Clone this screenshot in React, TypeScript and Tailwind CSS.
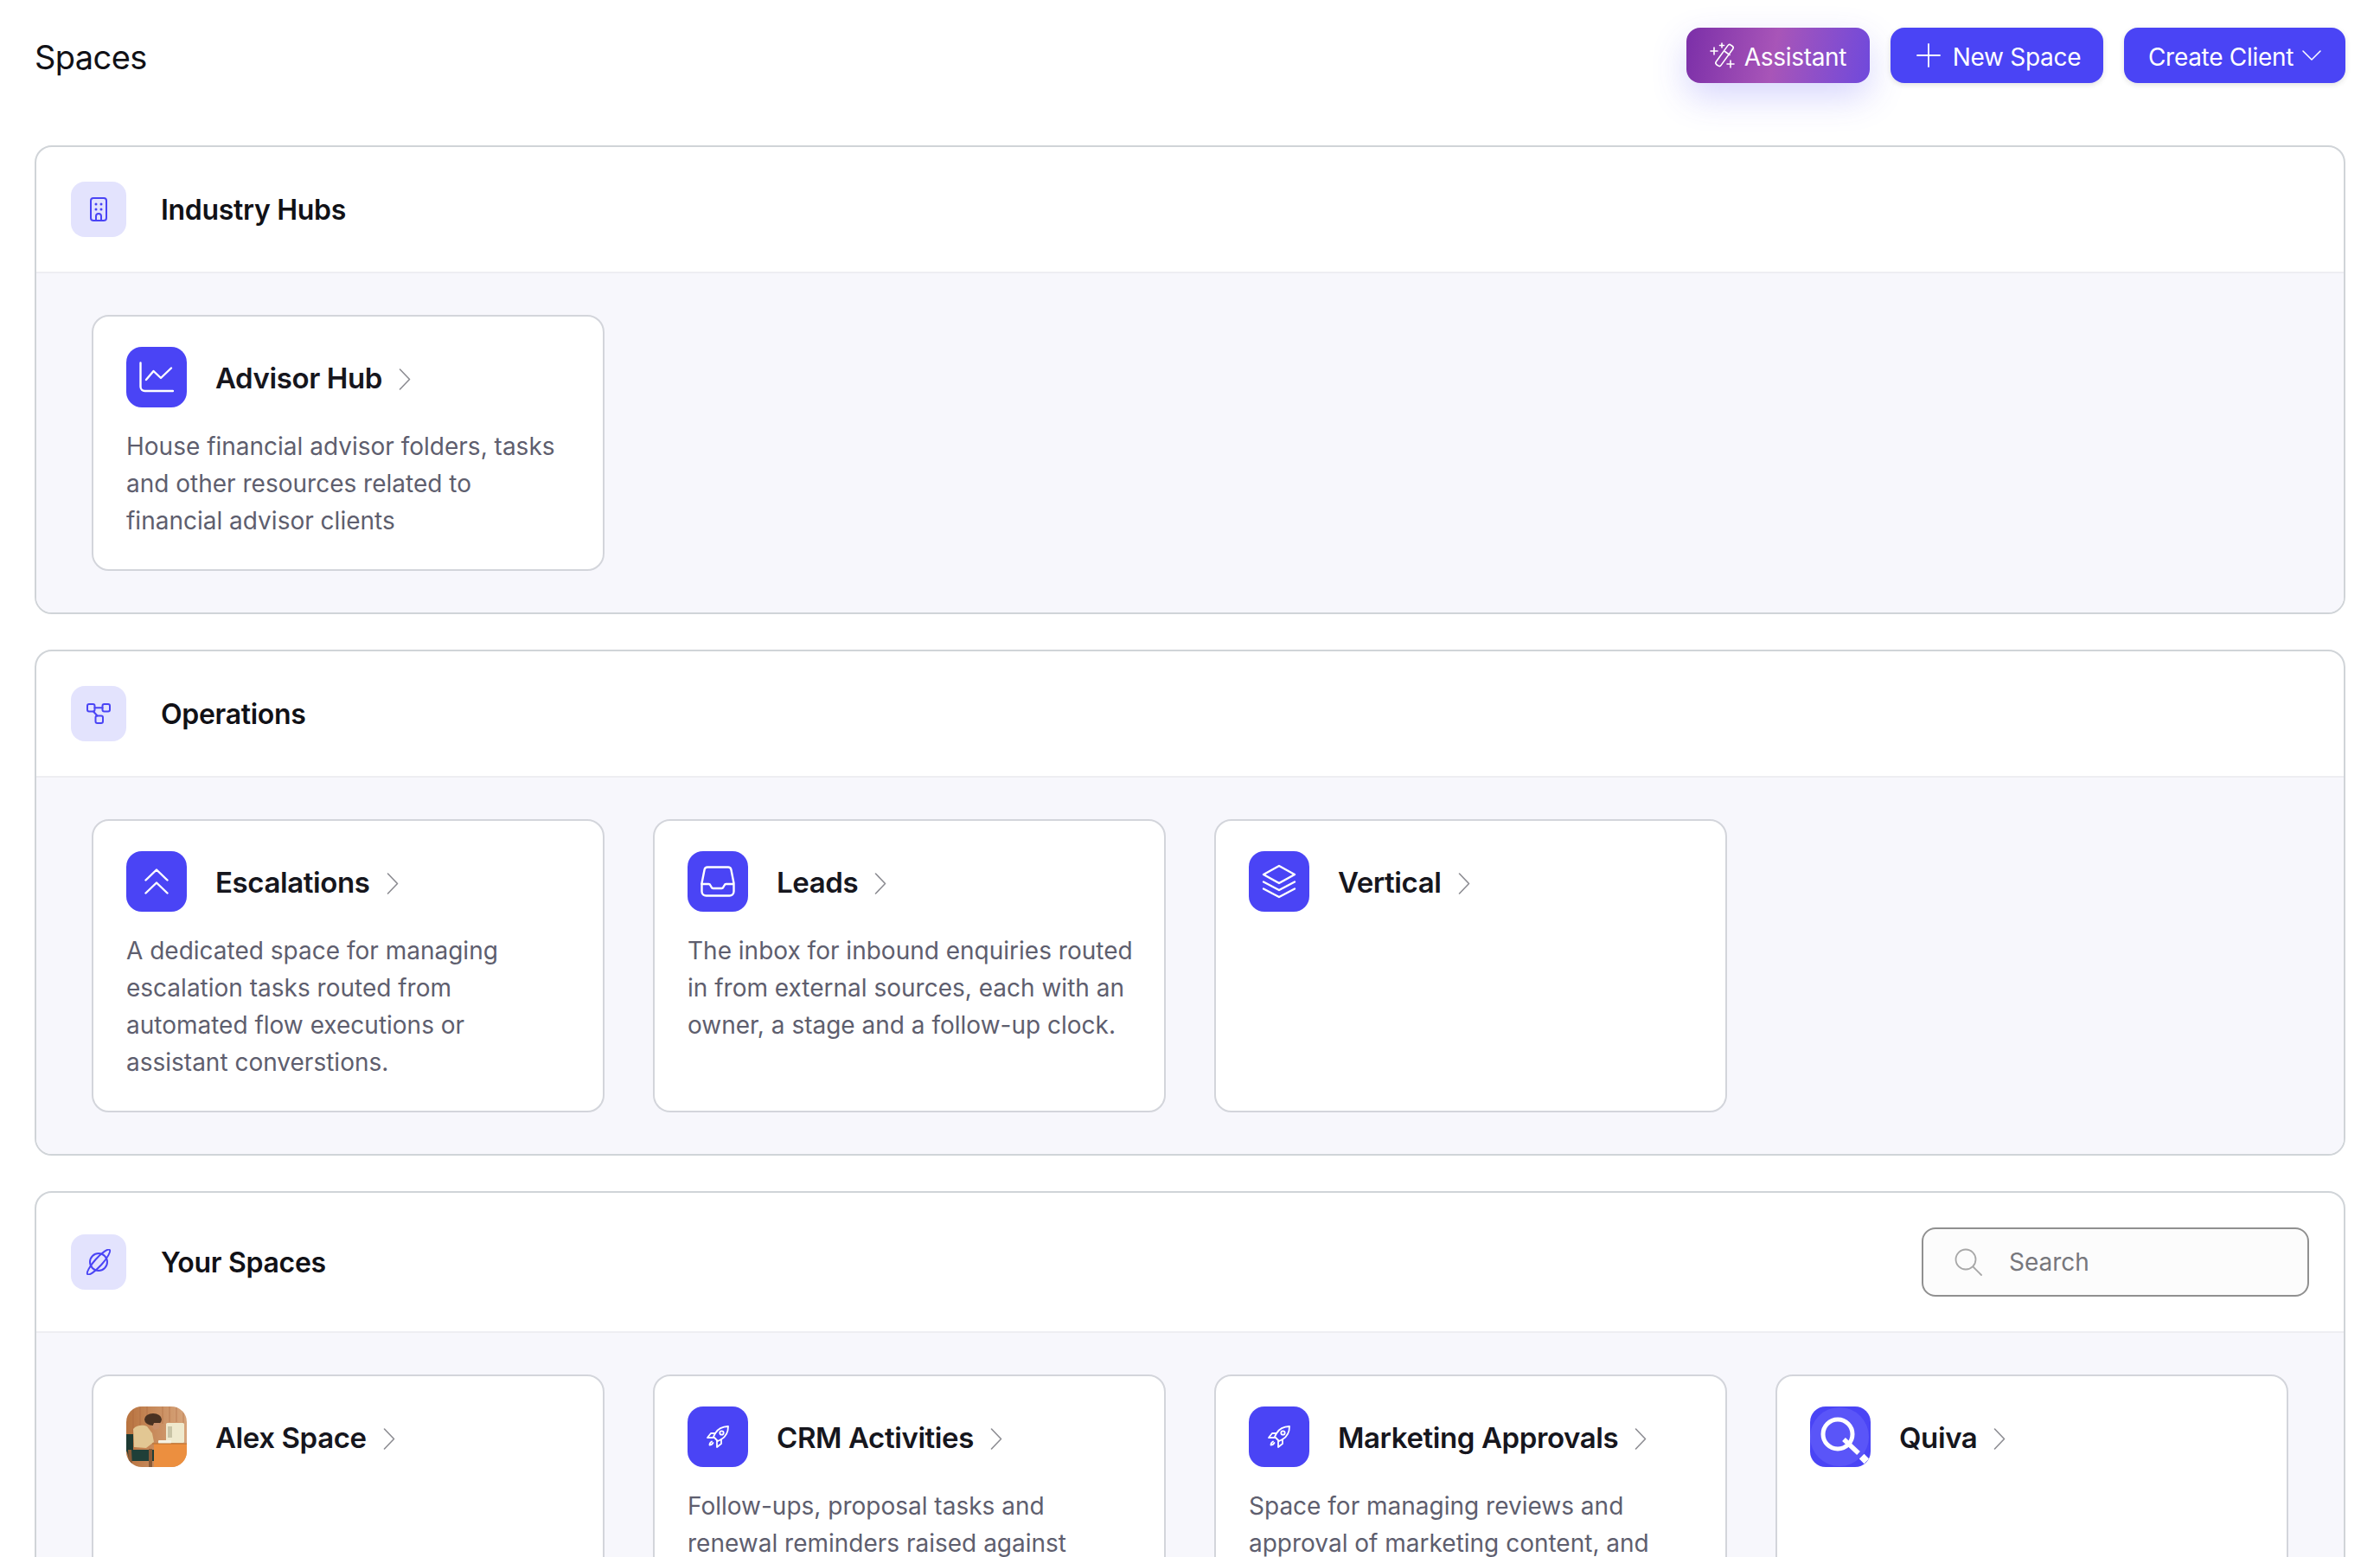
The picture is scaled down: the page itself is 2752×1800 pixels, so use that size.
import type { ReactNode } from "react";

type Space = { title: string; desc?: string; icon: ReactNode };

function Stroke({ w, h, sw = 2, children }: { w: number; h: number; sw?: number; children: ReactNode }) {
  return (
    <svg width={w} height={h} viewBox={`0 0 ${w} ${h}`} fill="none" stroke="currentColor" strokeWidth={sw} strokeLinecap="round" strokeLinejoin="round" className="shrink-0">
      {children}
    </svg>
  );
}

const BuildingIcon = () => (
  <Stroke w={20} h={28}>
    <rect x="1" y="1" width="18" height="26" rx="3" />
    <path d="M7 27v-5a3 3 0 0 1 6 0v5" />
    <g fill="currentColor" stroke="none">
      <circle cx="7" cy="8" r="1.5" />
      <circle cx="13" cy="8" r="1.5" />
      <circle cx="7" cy="14" r="1.5" />
      <circle cx="13" cy="14" r="1.5" />
    </g>
  </Stroke>
);

const DataflowIcon = () => (
  <Stroke w={28} h={24}>
    <rect x="1" y="1" width="8.5" height="8.5" rx="2" />
    <rect x="18.5" y="1" width="8.5" height="8.5" rx="2" />
    <rect x="10.5" y="14.5" width="8.5" height="8.5" rx="2" />
    <path d="M9.5 5.2h9M8 9.5l4.5 5" />
  </Stroke>
);

const PlanetIcon = () => (
  <Stroke w={32} h={30}>
    <circle cx="16" cy="15" r="10" />
    <ellipse cx="16" cy="15" rx="19" ry="4.5" transform="rotate(-48 16 15)" />
  </Stroke>
);

const ChartIcon = () => (
  <Stroke w={40} h={36} sw={2.4}>
    <path d="M1.5 1.5V29a5 5 0 0 0 5 5H39" />
    <path d="M8 21l8.5-10 8.5 8L37 7.5" />
  </Stroke>
);

const ChevronsUpIcon = () => (
  <Stroke w={28} h={30} sw={2.4}>
    <path d="M1.5 13.5L14 1.5l12.5 12M1.5 28.5L14 16.5l12.5 12" />
  </Stroke>
);

const InboxIcon = () => (
  <Stroke w={40} h={36} sw={2.4}>
    <path d="M8 1.5h24a3.5 3.5 0 0 1 3.4 2.7L38.5 20v9.5a5 5 0 0 1-5 5h-27a5 5 0 0 1-5-5V20L4.6 4.2A3.5 3.5 0 0 1 8 1.5z" />
    <path d="M1.5 21h8a2 2 0 0 1 1.8 1.2l1.4 2.6a2 2 0 0 0 1.8 1.2h10a2 2 0 0 0 1.8-1.2l1.4-2.6a2 2 0 0 1 1.8-1.2h8" />
  </Stroke>
);

const LayersIcon = () => (
  <Stroke w={40} h={40} sw={2.4}>
    <path d="M20 2l18 10-18 10L2 12z" />
    <path d="M2 20.5l18 9.5 18-9.5M2 28.5L20 38l18-9.5" />
  </Stroke>
);

const RocketIcon = () => (
  <Stroke w={28} h={28} sw={1.8}>
    <path d="M26 2c-7 .2-12 3-15 8l-2 4 5 5 4-2c5-3 8-8 8-15z" />
    <circle cx="18.5" cy="9.5" r="2.2" />
    <path d="M11 10H6l-4 5h7M18 17v5l-5 4v-7M7 19.5c-1.5.8-2.5 2.5-2.5 4 1.5 0 3.2-1 4-2.5" />
  </Stroke>
);

const WandIcon = () => (
  <Stroke w={30} h={30} sw={1.6}>
    <rect x="-3.5" y="-14" width="7" height="28" rx="2.5" transform="translate(17 15) rotate(36)" />
    <path d="M17.5 10.5l5.5 4M5 6v8M1 10h8M14 1v5M11.5 3.5h5M24 21v8M20 25h8" />
  </Stroke>
);

const PlusIcon = () => (
  <Stroke w={28} h={28} sw={1.8}>
    <path d="M14 1v26M1 14h26" />
  </Stroke>
);

const ChevronDownIcon = () => (
  <Stroke w={22} h={12} sw={1.5}>
    <path d="M1 1l10 10L21 1" />
  </Stroke>
);

const ChevronRightIcon = () => (
  <Stroke w={14} h={25} sw={1.6}>
    <path d="M1.5 1l11 11.5L1.5 24" />
  </Stroke>
);

const SearchIcon = () => (
  <Stroke w={32} h={32} sw={1.8}>
    <circle cx="13" cy="13" r="11.5" />
    <path d="M21.5 21.5L31 31" />
  </Stroke>
);

const RoundIcon = ({ children }: { children: ReactNode }) => (
  <div className="flex h-[70px] w-[70px] shrink-0 items-center justify-center rounded-[18px] bg-[#4a44f5] text-white">{children}</div>
);

const AlexAvatar = () => (
  <svg width="70" height="70" viewBox="0 0 70 70" className="shrink-0 rounded-[18px]">
    <defs>
      <linearGradient id="wood" x1="0" y1="0" x2="1" y2="0">
        <stop offset="0" stopColor="#b8733f" />
        <stop offset="0.5" stopColor="#c98d5f" />
        <stop offset="1" stopColor="#d7a57c" />
      </linearGradient>
    </defs>
    <rect width="70" height="70" fill="url(#wood)" />
    <path d="M8 0v44M16 0v30M24 0v14M42 0v20M50 0v18M58 0v18M66 0v20" stroke="#a5633a" strokeWidth="1" opacity="0.5" />
    <path d="M0 32h8v20H0z" fill="#1d3a33" />
    <path d="M0 50h32v13H4z" fill="#1f3f38" />
    <path d="M2 50h4l1 20H3zM26 49h4v21h-4z" fill="#8a5a36" />
    <path d="M8 26c4-5 12-5 16-3l6 8 2 10-9 7-14-1z" fill="#e2c793" />
    <ellipse cx="31" cy="15" rx="10" ry="7" fill="#4a3222" />
    <path d="M32 19h7l-1 6-5 2-3-3z" fill="#c98f6a" />
    <rect x="46" y="19" width="21" height="23" rx="1.5" fill="#efe9cd" />
    <rect x="48" y="23" width="5" height="13" fill="#c9c4a6" />
    <rect x="37" y="39" width="15" height="4" rx="1" fill="#f5f1e3" />
    <rect x="32" y="43" width="38" height="27" fill="#ec8f3f" />
    <path d="M30 43h40" stroke="#b96f2c" strokeWidth="1" />
  </svg>
);

const QuivaLogo = () => (
  <svg width="70" height="70" viewBox="0 0 70 70" className="shrink-0 rounded-[18px]">
    <rect width="70" height="70" fill="#4a44f5" />
    <circle cx="34" cy="35" r="34" fill="#5a55f8" />
    <circle cx="32" cy="32" r="17" fill="none" stroke="#fff" strokeWidth="5" />
    <path d="M39 38l17 16" stroke="#fff" strokeWidth="5.5" />
    <rect x="58.5" y="56.5" width="8" height="8" fill="#fff" transform="rotate(45 62.5 60.5)" />
  </svg>
);

const hubs: Space[] = [
  {
    title: "Advisor Hub",
    desc: "House financial advisor folders, tasks and other resources related to financial advisor clients",
    icon: <RoundIcon><ChartIcon /></RoundIcon>,
  },
];

const operations: Space[] = [
  {
    title: "Escalations",
    desc: "A dedicated space for managing escalation tasks routed from automated flow executions or assistant converstions.",
    icon: <RoundIcon><ChevronsUpIcon /></RoundIcon>,
  },
  {
    title: "Leads",
    desc: "The inbox for inbound enquiries routed in from external sources, each with an owner, a stage and a follow-up clock.",
    icon: <RoundIcon><InboxIcon /></RoundIcon>,
  },
  { title: "Vertical", icon: <RoundIcon><LayersIcon /></RoundIcon> },
];

const yourSpaces: Space[] = [
  { title: "Alex Space", icon: <AlexAvatar /> },
  {
    title: "CRM Activities",
    desc: "Follow-ups, proposal tasks and renewal reminders raised against",
    icon: <RoundIcon><RocketIcon /></RoundIcon>,
  },
  {
    title: "Marketing Approvals",
    desc: "Space for managing reviews and approval of marketing content, and",
    icon: <RoundIcon><RocketIcon /></RoundIcon>,
  },
  { title: "Quiva", icon: <QuivaLogo /> },
];

function SpaceCard({ space }: { space: Space }) {
  return (
    <div className="rounded-[20px] border-2 border-[#d3d5db] bg-white pt-[35px] pr-[36px] pb-[34px] pl-[38px]">
      <div className="flex h-[70px] items-center gap-[33px]">
        {space.icon}
        <div className="flex items-center gap-[19px] pt-[2px]">
          <span className="text-[33px] leading-[44px] font-semibold tracking-[-0.4px] text-[#16161d]">{space.title}</span>
          <span className="pt-[2px] text-[#8c8c92]">
            <ChevronRightIcon />
          </span>
        </div>
      </div>
      {space.desc && <p className="mt-[24px] text-[28px] leading-[43px] text-[#5e5e6e]">{space.desc}</p>}
    </div>
  );
}

function Section({ icon, title, right, spaces, tall }: { icon: ReactNode; title: string; right?: ReactNode; spaces: Space[]; tall?: boolean }) {
  return (
    <section className="rounded-[20px] border-2 border-[#d0d4d8] bg-white">
      <div className="flex items-center justify-between border-b-2 border-[#eeeef2] px-[40px] py-[40px]">
        <div className="flex items-center gap-[40px]">
          <div className="flex h-[64px] w-[64px] items-center justify-center rounded-[16px] bg-[#e3e3fd] text-[#4a44f5]">{icon}</div>
          <h2 className="pt-[2px] text-[32px] leading-[44px] font-semibold tracking-[-0.3px] text-[#111116]">{title}</h2>
        </div>
        {right}
      </div>
      <div className={`rounded-b-[18px] bg-[#f7f7fc] px-[64px] py-[48px] ${tall ? "min-h-[420px]" : ""}`}>
        <div className="grid grid-cols-4 gap-[56px]">
          {spaces.map((s) => (
            <SpaceCard key={s.title} space={s} />
          ))}
        </div>
      </div>
    </section>
  );
}

export default function App() {
  return (
    <div className="h-screen overflow-hidden bg-white px-[40px] pt-[32px] font-['Inter',sans-serif]">
      <header className="flex h-[64px] items-center justify-between">
        <h1 className="pt-[4px] text-[38px] font-normal tracking-[-0.6px] text-[#111116]">Spaces</h1>
        <div className="flex items-center gap-[24px] text-[28px] tracking-[-0.3px] text-white">
          <button className="flex h-[64px] w-[212px] items-center justify-center gap-[10px] rounded-[16px] bg-[linear-gradient(100deg,#7b2fa8_0%,#a855b8_48%,#6f49dc_100%)] shadow-[0_16px_40px_rgba(74,68,245,0.22)]">
            <WandIcon />
            <span className="pt-[3px]">Assistant</span>
          </button>
          <button className="flex h-[64px] w-[246px] items-center justify-center gap-[14px] rounded-[16px] bg-[#4a44f5] pl-[4px] shadow-[0_2px_6px_rgba(0,0,0,0.12)]">
            <PlusIcon />
            <span className="pt-[3px]">New Space</span>
          </button>
          <button className="flex h-[64px] w-[256px] items-center justify-center gap-[10px] rounded-[16px] bg-[#4a44f5] shadow-[0_2px_6px_rgba(0,0,0,0.12)]">
            <span className="pt-[3px]">Create Client</span>
            <ChevronDownIcon />
          </button>
        </div>
      </header>

      <main className="mt-[72px] flex flex-col gap-[41px]">
        <Section icon={<BuildingIcon />} title="Industry Hubs" spaces={hubs} />
        <Section icon={<DataflowIcon />} title="Operations" spaces={operations} />
        <Section
          icon={<PlanetIcon />}
          title="Your Spaces"
          tall
          spaces={yourSpaces}
          right={
            <div className="flex h-[80px] w-[448px] items-center gap-[31px] rounded-[16px] border-2 border-[#909090] bg-[#fcfcfc] pl-[36px] text-[#a8a8a8]">
              <SearchIcon />
              <input placeholder="Search" className="w-full bg-transparent text-[28px] outline-none placeholder:text-[#77777c]" />
            </div>
          }
        />
      </main>
    </div>
  );
}
